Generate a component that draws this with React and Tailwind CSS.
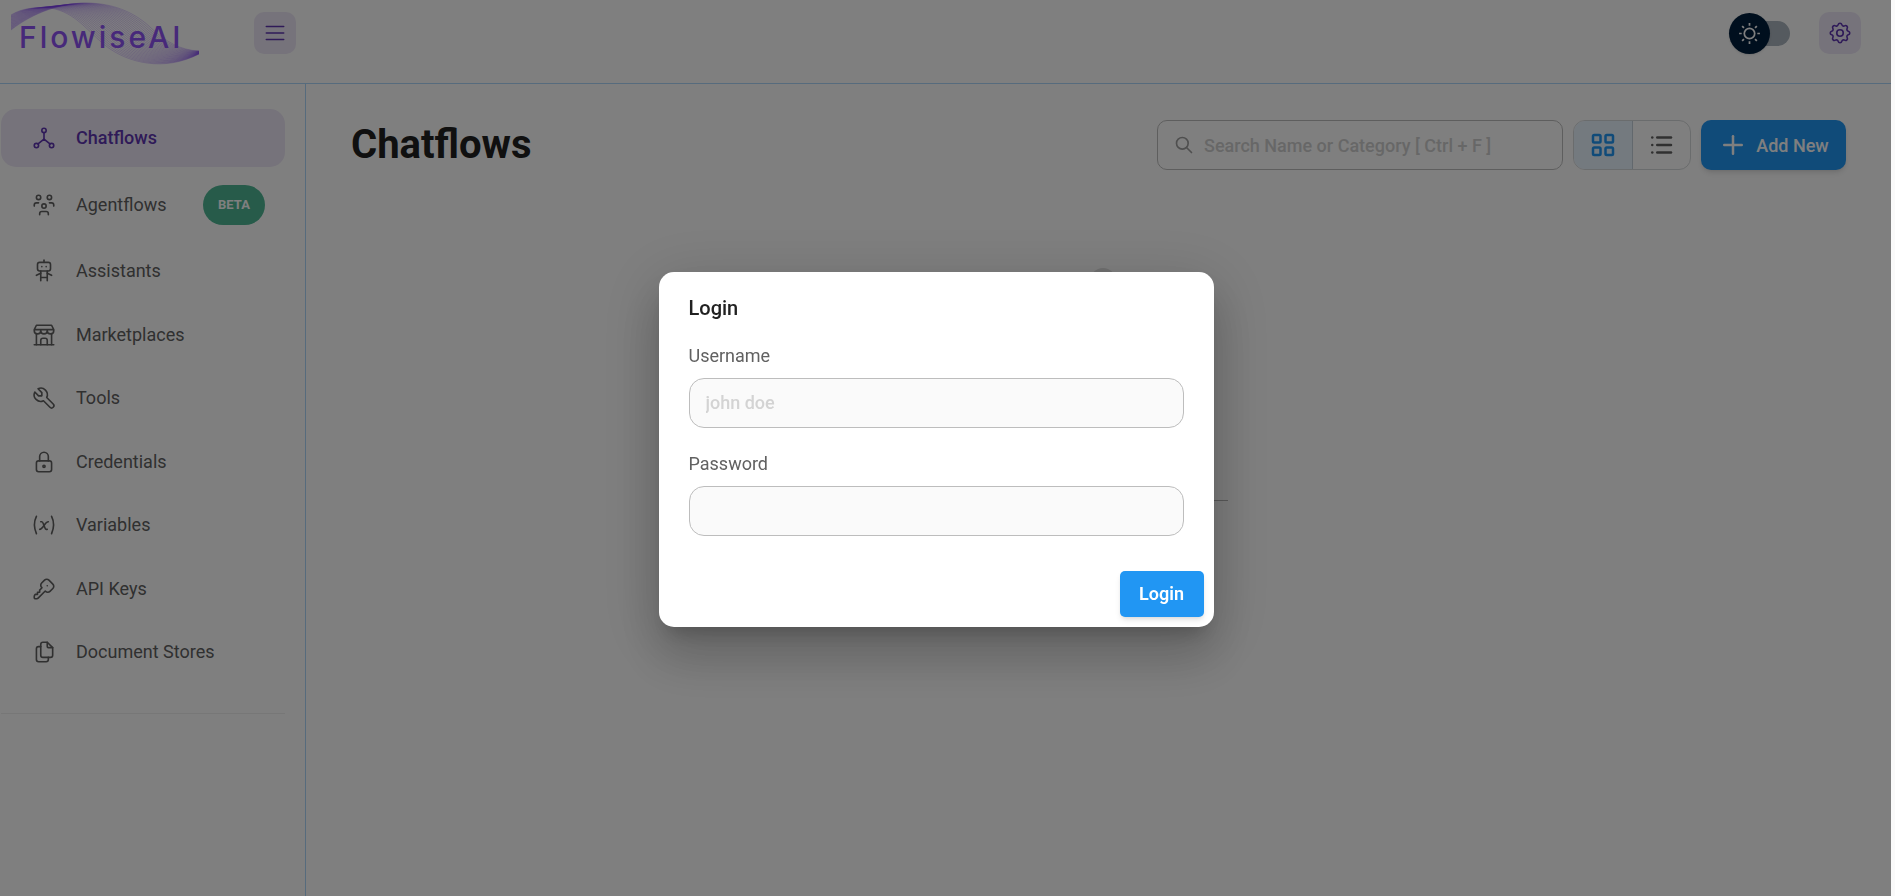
import React from 'react';
import {
  TbBuildingStore,
  TbFiles,
  TbHierarchy,
  TbKey,
  TbLayoutGrid,
  TbList,
  TbLock,
  TbMenu2,
  TbPlus,
  TbRobot,
  TbSearch,
  TbSettings,
  TbTool,
  TbUsersGroup,
  TbVariable,
} from 'react-icons/tb';

const MENU = [
  { title: 'Chatflows', icon: TbHierarchy, active: true },
  { title: 'Agentflows', icon: TbUsersGroup, badge: 'BETA' },
  { title: 'Assistants', icon: TbRobot },
  { title: 'Marketplaces', icon: TbBuildingStore },
  { title: 'Tools', icon: TbTool },
  { title: 'Credentials', icon: TbLock },
  { title: 'Variables', icon: TbVariable },
  { title: 'API Keys', icon: TbKey },
  { title: 'Document Stores', icon: TbFiles },
];

// The ribbon is a bundle of thin curves blended between its two edges
const EDGE_A = [11, 30, 34, 12, 62, 3, 86, 3, 118, 3, 138, 16, 150, 27, 166, 42, 180, 50, 199, 51];
const EDGE_B = [11, 15, 22, 8, 36, 7, 50, 8, 76, 12, 88, 32, 106, 46, 128, 63, 164, 72, 199, 54];
const RIBBON = Array.from({ length: 26 }, (_, i) => {
  const p = EDGE_A.map((a, k) => a + ((EDGE_B[k] - a) * i) / 25);
  return `M${p[0]} ${p[1]}C${p.slice(2, 8).join(' ')} ${p.slice(8, 14).join(' ')} ${p.slice(14, 20).join(' ')}`;
});

function Logo() {
  return (
    <svg width="200" height="67" viewBox="0 0 200 67" role="img" aria-label="FlowiseAI">
      <g fill="none" stroke="#7c3aed" strokeWidth="0.6" strokeOpacity="0.4">
        {RIBBON.map((d) => (
          <path key={d} d={d} />
        ))}
      </g>
      <text x="19" y="48" fill="#8f52f5" fontSize="30" className="font-['Inter',sans-serif] font-medium tracking-widest">
        FlowiseAI
      </text>
    </svg>
  );
}

function SunIcon() {
  return (
    <svg width="25" height="25" viewBox="0 0 20 20" fill="currentColor">
      <path d="M9.305 1.667V3.75h1.389V1.667h-1.39zm-4.707 1.95l-.982.982L5.09 6.072l.982-.982-1.473-1.473zm10.802 0L13.927 5.09l.982.982 1.473-1.473-.982-.982zM10 5.139a4.872 4.872 0 00-4.862 4.86A4.872 4.872 0 0010 14.862 4.872 4.872 0 0014.86 10 4.872 4.872 0 0010 5.139zm0 1.389A3.462 3.462 0 0113.471 10a3.462 3.462 0 01-3.473 3.472A3.462 3.462 0 016.527 10 3.462 3.462 0 0110 6.528zM1.665 9.305v1.39h2.083v-1.39H1.666zm14.583 0v1.39h2.084v-1.39h-2.084zM5.09 13.928L3.616 15.4l.982.982 1.473-1.473-.982-.982zm9.82 0l-.982.982 1.473 1.473.982-.982-1.473-1.473zM9.305 16.25v2.083h1.389V16.25h-1.39z" />
    </svg>
  );
}

function Header() {
  return (
    <header className="flex h-[84px] items-start justify-between border-b border-[#90caf9]/75 pr-[30px]">
      <div className="flex items-start">
        <a href="#home" className="block w-[254px]">
          <Logo />
        </a>
        <button
          type="button"
          aria-label="Toggle menu"
          className="mt-3 flex size-[42px] items-center justify-center rounded-[10px] bg-[#ede7f6] text-[#5e35b1]"
        >
          <TbMenu2 size={26} strokeWidth={1.5} />
        </button>
      </div>
      <div className="mt-3 flex items-center gap-[29px]">
        <label className="flex w-[61px] items-center">
          <input type="checkbox" aria-label="Dark mode" className="sr-only" />
          <span className="z-10 flex size-[41px] shrink-0 items-center justify-center rounded-full bg-[#001e3c] text-white shadow">
            <SunIcon />
          </span>
          <span className="-ml-5 h-[25px] w-10 rounded-full bg-[#aab4be]" />
        </label>
        <button
          type="button"
          aria-label="Settings"
          className="flex size-[42px] items-center justify-center rounded-[10px] bg-[#ede7f6] text-[#5e35b1]"
        >
          <TbSettings size={26} strokeWidth={1.5} />
        </button>
      </div>
    </header>
  );
}

function Sidebar() {
  return (
    <aside className="w-[306px] shrink-0 border-r border-[#90caf9]/75 pt-[25px] pr-5 pl-px">
      <nav>
        <ul className="flex h-[572px] flex-col justify-between">
          {MENU.map(({ title, icon: Icon, active, badge }) => (
            <li key={title}>
              <a
                href={`#${title}`}
                className={`flex min-h-[58px] items-center rounded-[15px] py-3 pr-5 pl-[30px] ${
                  active ? 'bg-[#ede7f6] font-medium text-[#5e35b1]' : 'text-[#616161]'
                }`}
              >
                <Icon size={26} strokeWidth={1.5} className="mr-[19px]" />
                <span className="flex-1 text-[18px] leading-6">{title}</span>
                {badge && (
                  <span className="flex h-10 w-[62px] items-center justify-center rounded-[20px] bg-[#4fb795] text-[13px] font-bold text-white">
                    {badge}
                  </span>
                )}
              </a>
            </li>
          ))}
        </ul>
      </nav>
      <hr className="mt-8 border-[#efefef]" />
    </aside>
  );
}

function EmptyState() {
  return (
    <svg width="258" height="250" viewBox="0 0 258 250" fill="none">
      <circle cx="133" cy="17" r="13" fill="#e0e0e0" />
      <path d="M133 30v70M60 150h142" stroke="#ccc" />
      <rect x="84" y="90" width="90" height="120" rx="6" fill="#f2f2f2" />
      <path d="M0 236.5h258" stroke="#b5b5b5" />
    </svg>
  );
}

function Content() {
  return (
    <main className="flex-1 pt-9 pr-[45px] pl-[45px]">
      <div className="flex items-center justify-between">
        <h1 className="text-[40px] leading-[50px] font-bold text-[#212121]">Chatflows</h1>
        <div className="flex items-center gap-[10px]">
          <label className="flex h-[50px] w-[406px] items-center gap-[10px] rounded-[10px] border border-[#bdbdbd] px-4 text-[#9e9e9e]">
            <TbSearch size={20} strokeWidth={2} />
            <input
              type="search"
              aria-label="Search"
              placeholder="Search Name or Category [ Ctrl + F ]"
              className="min-w-0 flex-1 bg-transparent text-[18px] font-medium outline-none placeholder:text-[#cfcfcf]"
            />
          </label>
          <div className="flex h-[50px] w-[118px] overflow-hidden rounded-[12px] border border-[#d5d8da]">
            <button
              type="button"
              aria-label="Card view"
              className="flex flex-1 items-center justify-center border-r border-[#c4d0da] bg-[#e9f4fe] text-[#2196f3]"
            >
              <TbLayoutGrid size={30} />
            </button>
            <button type="button" aria-label="List view" className="flex flex-1 items-center justify-center text-[#616161]">
              <TbList size={30} />
            </button>
          </div>
          <button
            type="button"
            className="flex h-[50px] w-[145px] items-center justify-center gap-2 rounded-[10px] bg-[#2196f3] text-[18px] font-medium text-white shadow-md"
          >
            <TbPlus size={30} strokeWidth={2} />
            Add New
          </button>
        </div>
      </div>
      <div className="mt-[94px] flex justify-center">
        <EmptyState />
      </div>
    </main>
  );
}

function LoginDialog() {
  const input =
    'h-[50px] w-full rounded-[15px] border border-[#bdbdbd] bg-[#fafafa] px-4 text-[18px] font-medium outline-none placeholder:text-[#d3d3d3]';

  return (
    <div className="fixed inset-y-0 right-1 left-0 z-20 flex items-center justify-center bg-black/50 pt-[2px] pr-[19px]">
      <form
        role="dialog"
        aria-labelledby="login-title"
        className="w-[555px] rounded-[15px] bg-white shadow-[0_14px_19px_-9px_rgba(0,0,0,0.2),0_30px_48px_4px_rgba(0,0,0,0.14),0_11px_58px_10px_rgba(0,0,0,0.12)]"
      >
        <h2 id="login-title" className="px-[30px] pt-5 text-[20px] leading-8 font-medium text-[#212121]">
          Login
        </h2>
        <div className="px-[30px] pt-5">
          <label htmlFor="username" className="block text-[18px] leading-6 text-[#616161]">
            Username
          </label>
          <input id="username" type="text" placeholder="john doe" className={`mt-[10px] ${input}`} />
        </div>
        <div className="px-[30px] pt-6">
          <label htmlFor="password" className="block text-[18px] leading-6 text-[#616161]">
            Password
          </label>
          <input id="password" type="password" className={`mt-[10px] ${input}`} />
        </div>
        <div className="flex justify-end px-[10px] pt-[35px] pb-[10px]">
          <button
            type="submit"
            className="h-[46px] w-[84px] rounded-[5px] bg-[#2196f3] text-[18px] font-semibold text-white shadow-md"
          >
            Login
          </button>
        </div>
      </form>
    </div>
  );
}

export default function App() {
  return (
    <div className="flex min-h-screen flex-col border-r-4 border-[#fafafa] bg-white font-['Roboto',sans-serif]">
      <Header />
      <div className="flex flex-1">
        <Sidebar />
        <Content />
      </div>
      <LoginDialog />
    </div>
  );
}
